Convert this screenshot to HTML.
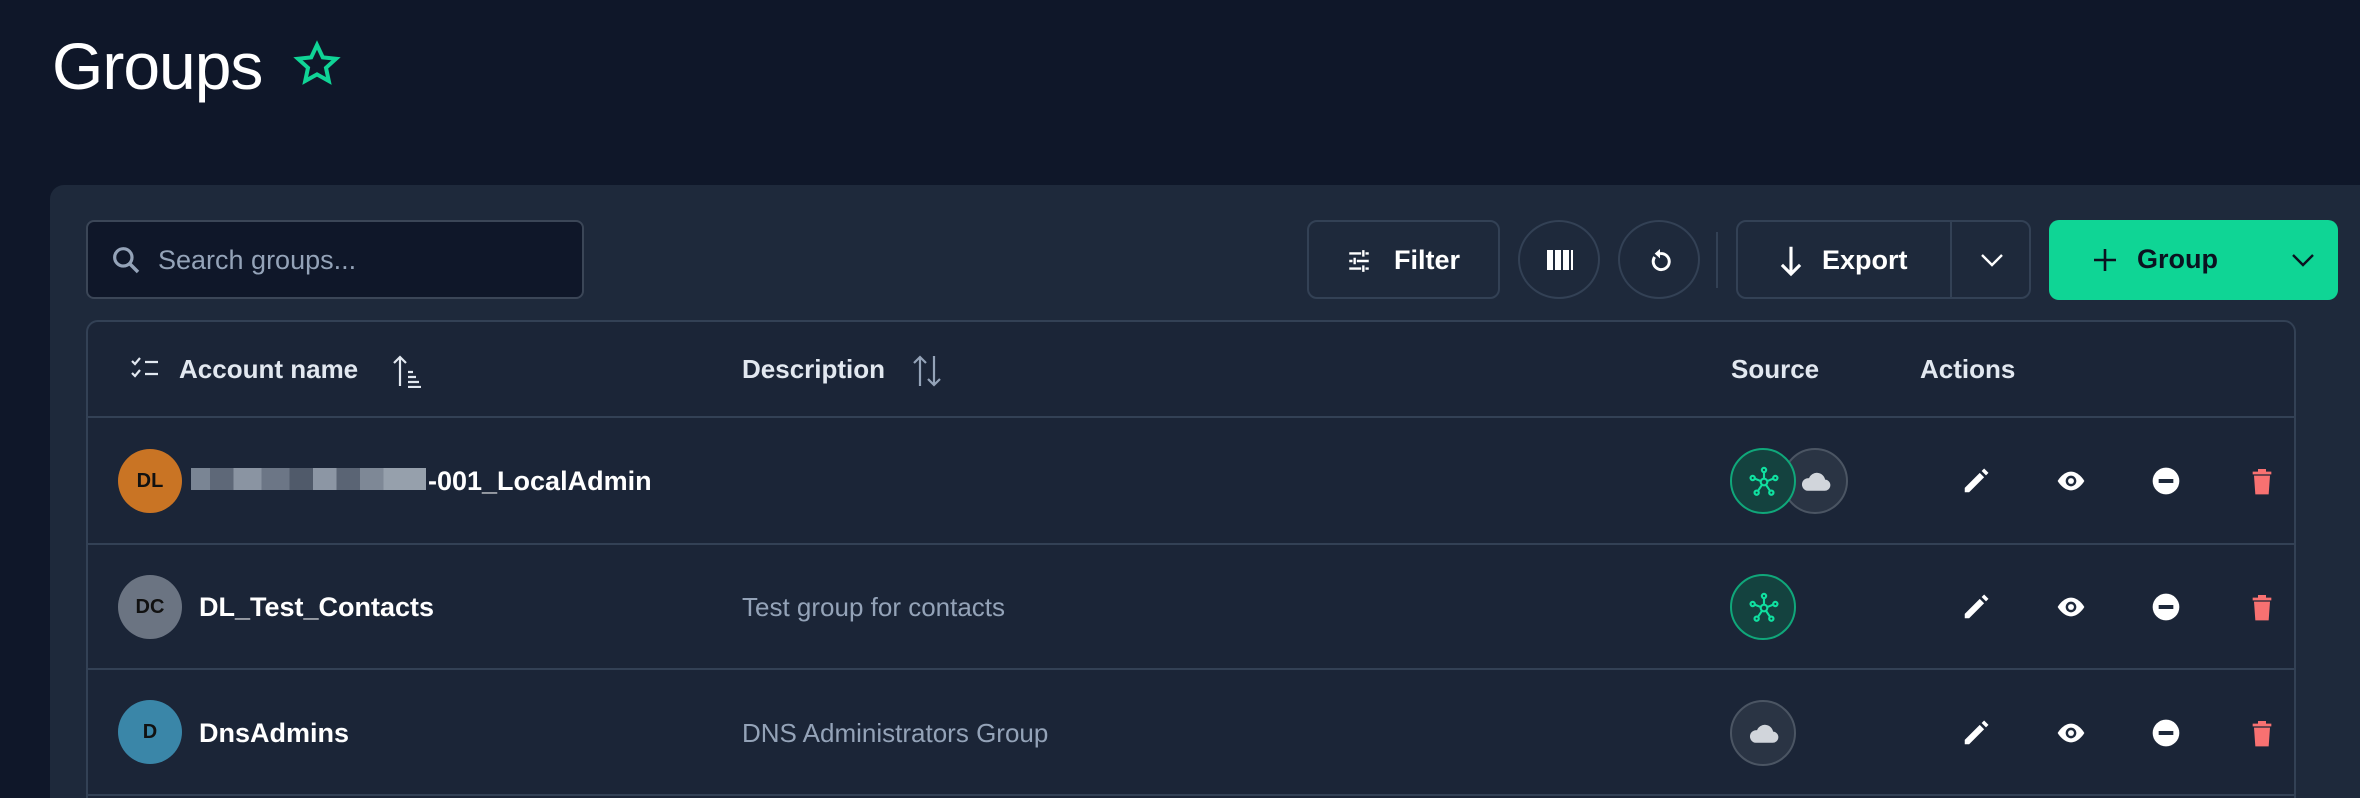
<!DOCTYPE html>
<html><head><meta charset="utf-8"><style>
*{box-sizing:border-box;margin:0;padding:0}
html,body{width:2360px;height:798px;overflow:hidden}
body{background:#0f1729;font-family:"Liberation Sans",sans-serif;position:relative;color:#fff}
.abs{position:absolute}
h1{position:absolute;left:52px;top:28px;font-size:66px;font-weight:400;letter-spacing:-1px;color:#fff}
.panel{position:absolute;left:50px;top:185px;width:2310px;height:613px;background:#1e293b;border-radius:14px 0 0 0}
.search{left:86px;top:220px;width:498px;height:79px;background:#0f1729;border:2px solid #3b4657;border-radius:8px}
.search span{position:absolute;left:70px;top:23px;font-size:27px;color:#94a3b8}
.btn{top:220px;height:79px;border:2px solid #334155;border-radius:10px}
.circ{border-radius:50%}
.table{left:86px;top:320px;width:2210px;height:490px;border:2px solid #334155;border-radius:12px;background:#1b2537}
.hd{font-size:26px;font-weight:700;color:#e2e8f0;top:354px}
.row{left:86px;width:2210px;height:2px;background:#334155}
.av{width:64px;height:64px;border-radius:50%;left:118px;color:#111;font-weight:700;font-size:20px;text-align:center;line-height:64px}
.nm{left:199px;font-size:27px;font-weight:700;color:#fff}
.ds{left:742px;font-size:26px;color:#94a3b8}
.src{width:66px;height:66px;border-radius:50%}
.g{background:#14423f;border:2px solid #10a77a}
.c{background:#2a3444;border:2px solid #4b5563}
</style></head><body>
<h1>Groups</h1>
<svg class="abs" style="left:292px;top:40px" width="50" height="48" viewBox="0 0 24 24"><path d="M12 2.5l2.9 6.2 6.6.7-5 4.5 1.4 6.6L12 17.2l-5.9 3.3 1.4-6.6-5-4.5 6.6-.7z" fill="none" stroke="#10d496" stroke-width="2" stroke-linejoin="miter"/></svg>
<div class="panel"></div>
<div class="abs search"><svg class="abs" style="left:22px;top:22px" width="32" height="32" viewBox="0 0 24 24"><circle cx="10" cy="10" r="6.5" fill="none" stroke="#94a3b8" stroke-width="2.4"/><path d="M15 15l6 6" stroke="#94a3b8" stroke-width="2.6"/></svg><span>Search groups...</span></div>
<div class="abs btn" style="left:1307px;width:193px"><svg class="abs" style="left:36px;top:26px" width="28" height="26" viewBox="0 0 24 24" stroke="#fff" stroke-width="2.2"><path d="M3 5h11M18 5h3M3 12h3M10 12h11M3 19h11M18 19h3M16 2v6M8 9v6M16 16v6"/></svg><span class="abs" style="left:85px;top:23px;font-size:27px;font-weight:700">Filter</span></div>
<div class="abs btn circ" style="left:1518px;width:82px"><div class="abs" style="left:27px;top:28px;width:26px;height:20px;background:repeating-linear-gradient(90deg,#fff 0 6px,transparent 6px 8px)"></div></div>
<div class="abs btn circ" style="left:1618px;width:82px"><svg class="abs" style="left:24px;top:22px" width="32" height="34" viewBox="0 0 24 24"><path d="M8 9a6 6 0 1 0 4-2.5" fill="none" stroke="#fff" stroke-width="2.2"/><path d="M12 3v7l-4-3.5z" fill="#fff"/></svg></div>
<div class="abs" style="left:1716px;top:232px;width:2px;height:56px;background:#334155"></div>
<div class="abs btn" style="left:1736px;width:295px"><svg class="abs" style="left:40px;top:22px" width="26" height="34" viewBox="0 0 20 26"><path d="M10 2v21M3 16l7 7 7-7" fill="none" stroke="#fff" stroke-width="2.4"/></svg><span class="abs" style="left:84px;top:23px;font-size:27px;font-weight:700">Export</span><div class="abs" style="left:212px;top:0;width:2px;height:75px;background:#334155"></div><svg class="abs" style="left:240px;top:28px" width="28" height="20" viewBox="0 0 28 20"><path d="M4 5l10 10 10-10" fill="none" stroke="#fff" stroke-width="2.4"/></svg></div>
<div class="abs" style="left:2049px;top:220px;width:289px;height:80px;background:#0fd595;border-radius:10px"><svg class="abs" style="left:42px;top:26px" width="28" height="28" viewBox="0 0 28 28"><path d="M14 3v22M3 14h22" stroke="#0b1220" stroke-width="2.6"/></svg><span class="abs" style="left:88px;top:24px;font-size:27px;font-weight:700;color:#0b1220">Group</span><svg class="abs" style="left:240px;top:30px" width="28" height="20" viewBox="0 0 28 20"><path d="M4 5l10 10 10-10" fill="none" stroke="#0b1220" stroke-width="2.4"/></svg></div>

<div class="abs table"></div>
<svg class="abs" style="left:130px;top:356px" width="30" height="26" viewBox="0 0 30 26" stroke="#e2e8f0" stroke-width="2.2" fill="none"><path d="M2 5l3 3 5-6M2 17l3 3 5-6M15 6h13M15 18h13"/></svg>
<span class="abs hd" style="left:179px">Account name</span>
<svg class="abs" style="left:392px;top:354px" width="32" height="34" viewBox="0 0 32 34" stroke="#e2e8f0" stroke-width="2.2" fill="none"><path d="M8 32V3M2 9l6-6 6 6M16 18h5M16 23h8M16 28h11M16 33h13"/></svg>
<span class="abs hd" style="left:742px">Description</span>
<svg class="abs" style="left:912px;top:354px" width="32" height="34" viewBox="0 0 32 34" stroke="#94a3b8" stroke-width="2.2" fill="none"><path d="M8 32V3M2 9l6-6 6 6M22 2v29M16 25l6 6 6-6"/></svg>
<span class="abs hd" style="left:1731px">Source</span>
<span class="abs hd" style="left:1920px">Actions</span>
<div class="abs row" style="top:416px"></div>
<div class="abs row" style="top:543px"></div>
<div class="abs row" style="top:668px"></div>
<div class="abs row" style="top:794px"></div>

<div class="abs av" style="top:449px;background:#c97424">DL</div>
<div class="abs" style="left:191px;top:468px;width:235px;height:22px;background:linear-gradient(90deg,#7a8594 0 8%,#5e6878 8% 18%,#8a94a2 18% 30%,#6c7686 30% 42%,#505a6a 42% 52%,#8c96a4 52% 62%,#5a6474 62% 72%,#7e8896 72% 82%,#96a0ac 82% 100%)"></div>
<span class="abs nm" style="left:428px;top:466px">-001_LocalAdmin</span>
<div class="abs av" style="top:575px;background:#6b7482">DC</div>
<span class="abs nm" style="top:592px">DL_Test_Contacts</span>
<span class="abs ds" style="top:592px">Test group for contacts</span>
<div class="abs av" style="top:700px;background:#3a86a8">D</div>
<span class="abs nm" style="top:718px">DnsAdmins</span>
<span class="abs ds" style="top:718px">DNS Administrators Group</span>

<div class="abs src c" style="left:1782px;top:448px"><svg class="abs" style="left:15px;top:17px" width="34" height="28" viewBox="0 0 24 20"><path d="M6 17h12a4 4 0 0 0 .5-8A6 6 0 0 0 7 8a4.5 4.5 0 0 0-1 9z" fill="#d1d5db"/></svg></div>
<div class="abs src g" style="left:1730px;top:448px"></div>
<svg class="abs" style="left:1748px;top:466px" width="32" height="32" viewBox="0 0 24 24" stroke="#10e0a0" stroke-width="1.6" fill="none"><circle cx="12" cy="12" r="2.5"/><circle cx="12" cy="3" r="1.6"/><circle cx="3.5" cy="9" r="1.6"/><circle cx="20.5" cy="9" r="1.6"/><circle cx="6.5" cy="20" r="1.6"/><circle cx="17.5" cy="20" r="1.6"/><path d="M12 4.6v5M5 9.5l4.6 1.8M19 9.5l-4.6 1.8M7.5 18.6l3-4.5M16.5 18.6l-3-4.5"/></svg>
<div class="abs src g" style="left:1730px;top:574px"></div>
<svg class="abs" style="left:1748px;top:592px" width="32" height="32" viewBox="0 0 24 24" stroke="#10e0a0" stroke-width="1.6" fill="none"><circle cx="12" cy="12" r="2.5"/><circle cx="12" cy="3" r="1.6"/><circle cx="3.5" cy="9" r="1.6"/><circle cx="20.5" cy="9" r="1.6"/><circle cx="6.5" cy="20" r="1.6"/><circle cx="17.5" cy="20" r="1.6"/><path d="M12 4.6v5M5 9.5l4.6 1.8M19 9.5l-4.6 1.8M7.5 18.6l3-4.5M16.5 18.6l-3-4.5"/></svg>
<div class="abs src c" style="left:1730px;top:700px"><svg class="abs" style="left:15px;top:17px" width="34" height="28" viewBox="0 0 24 20"><path d="M6 17h12a4 4 0 0 0 .5-8A6 6 0 0 0 7 8a4.5 4.5 0 0 0-1 9z" fill="#d1d5db"/></svg></div>

<svg width="0" height="0" style="position:absolute"><defs>
<g id="pen"><path d="M3 21v-3.5L15 5.5l3.5 3.5L6.5 21z M16.5 4l2-2 3.5 3.5-2 2z" fill="#fff"/></g>
<g id="eye"><path d="M12 5C6 5 2 12 2 12s4 7 10 7 10-7 10-7-4-7-10-7z" fill="#fff"/><circle cx="12" cy="12" r="4" fill="#1e293b"/><circle cx="12" cy="12" r="2.2" fill="#fff"/></g>
<g id="min"><circle cx="12" cy="12" r="10" fill="#fff"/><rect x="6.5" y="10.5" width="11" height="3" fill="#1e293b"/></g>
<g id="tr"><path d="M5 5h14v2H5zM9 3h6v2H9zM6 8h12l-1 14H7z" fill="#f87171"/></g>
</defs></svg>
<svg class="abs" style="left:1961px;top:466px" width="30" height="30" viewBox="0 0 24 24"><use href="#pen"/></svg>
<svg class="abs" style="left:2055px;top:465px" width="32" height="32" viewBox="0 0 24 24"><use href="#eye"/></svg>
<svg class="abs" style="left:2150px;top:465px" width="32" height="32" viewBox="0 0 24 24"><use href="#min"/></svg>
<svg class="abs" style="left:2246px;top:464px" width="32" height="34" viewBox="0 0 24 24"><use href="#tr"/></svg>
<svg class="abs" style="left:1961px;top:592px" width="30" height="30" viewBox="0 0 24 24"><use href="#pen"/></svg>
<svg class="abs" style="left:2055px;top:591px" width="32" height="32" viewBox="0 0 24 24"><use href="#eye"/></svg>
<svg class="abs" style="left:2150px;top:591px" width="32" height="32" viewBox="0 0 24 24"><use href="#min"/></svg>
<svg class="abs" style="left:2246px;top:590px" width="32" height="34" viewBox="0 0 24 24"><use href="#tr"/></svg>
<svg class="abs" style="left:1961px;top:718px" width="30" height="30" viewBox="0 0 24 24"><use href="#pen"/></svg>
<svg class="abs" style="left:2055px;top:717px" width="32" height="32" viewBox="0 0 24 24"><use href="#eye"/></svg>
<svg class="abs" style="left:2150px;top:717px" width="32" height="32" viewBox="0 0 24 24"><use href="#min"/></svg>
<svg class="abs" style="left:2246px;top:716px" width="32" height="34" viewBox="0 0 24 24"><use href="#tr"/></svg>
</body></html>
